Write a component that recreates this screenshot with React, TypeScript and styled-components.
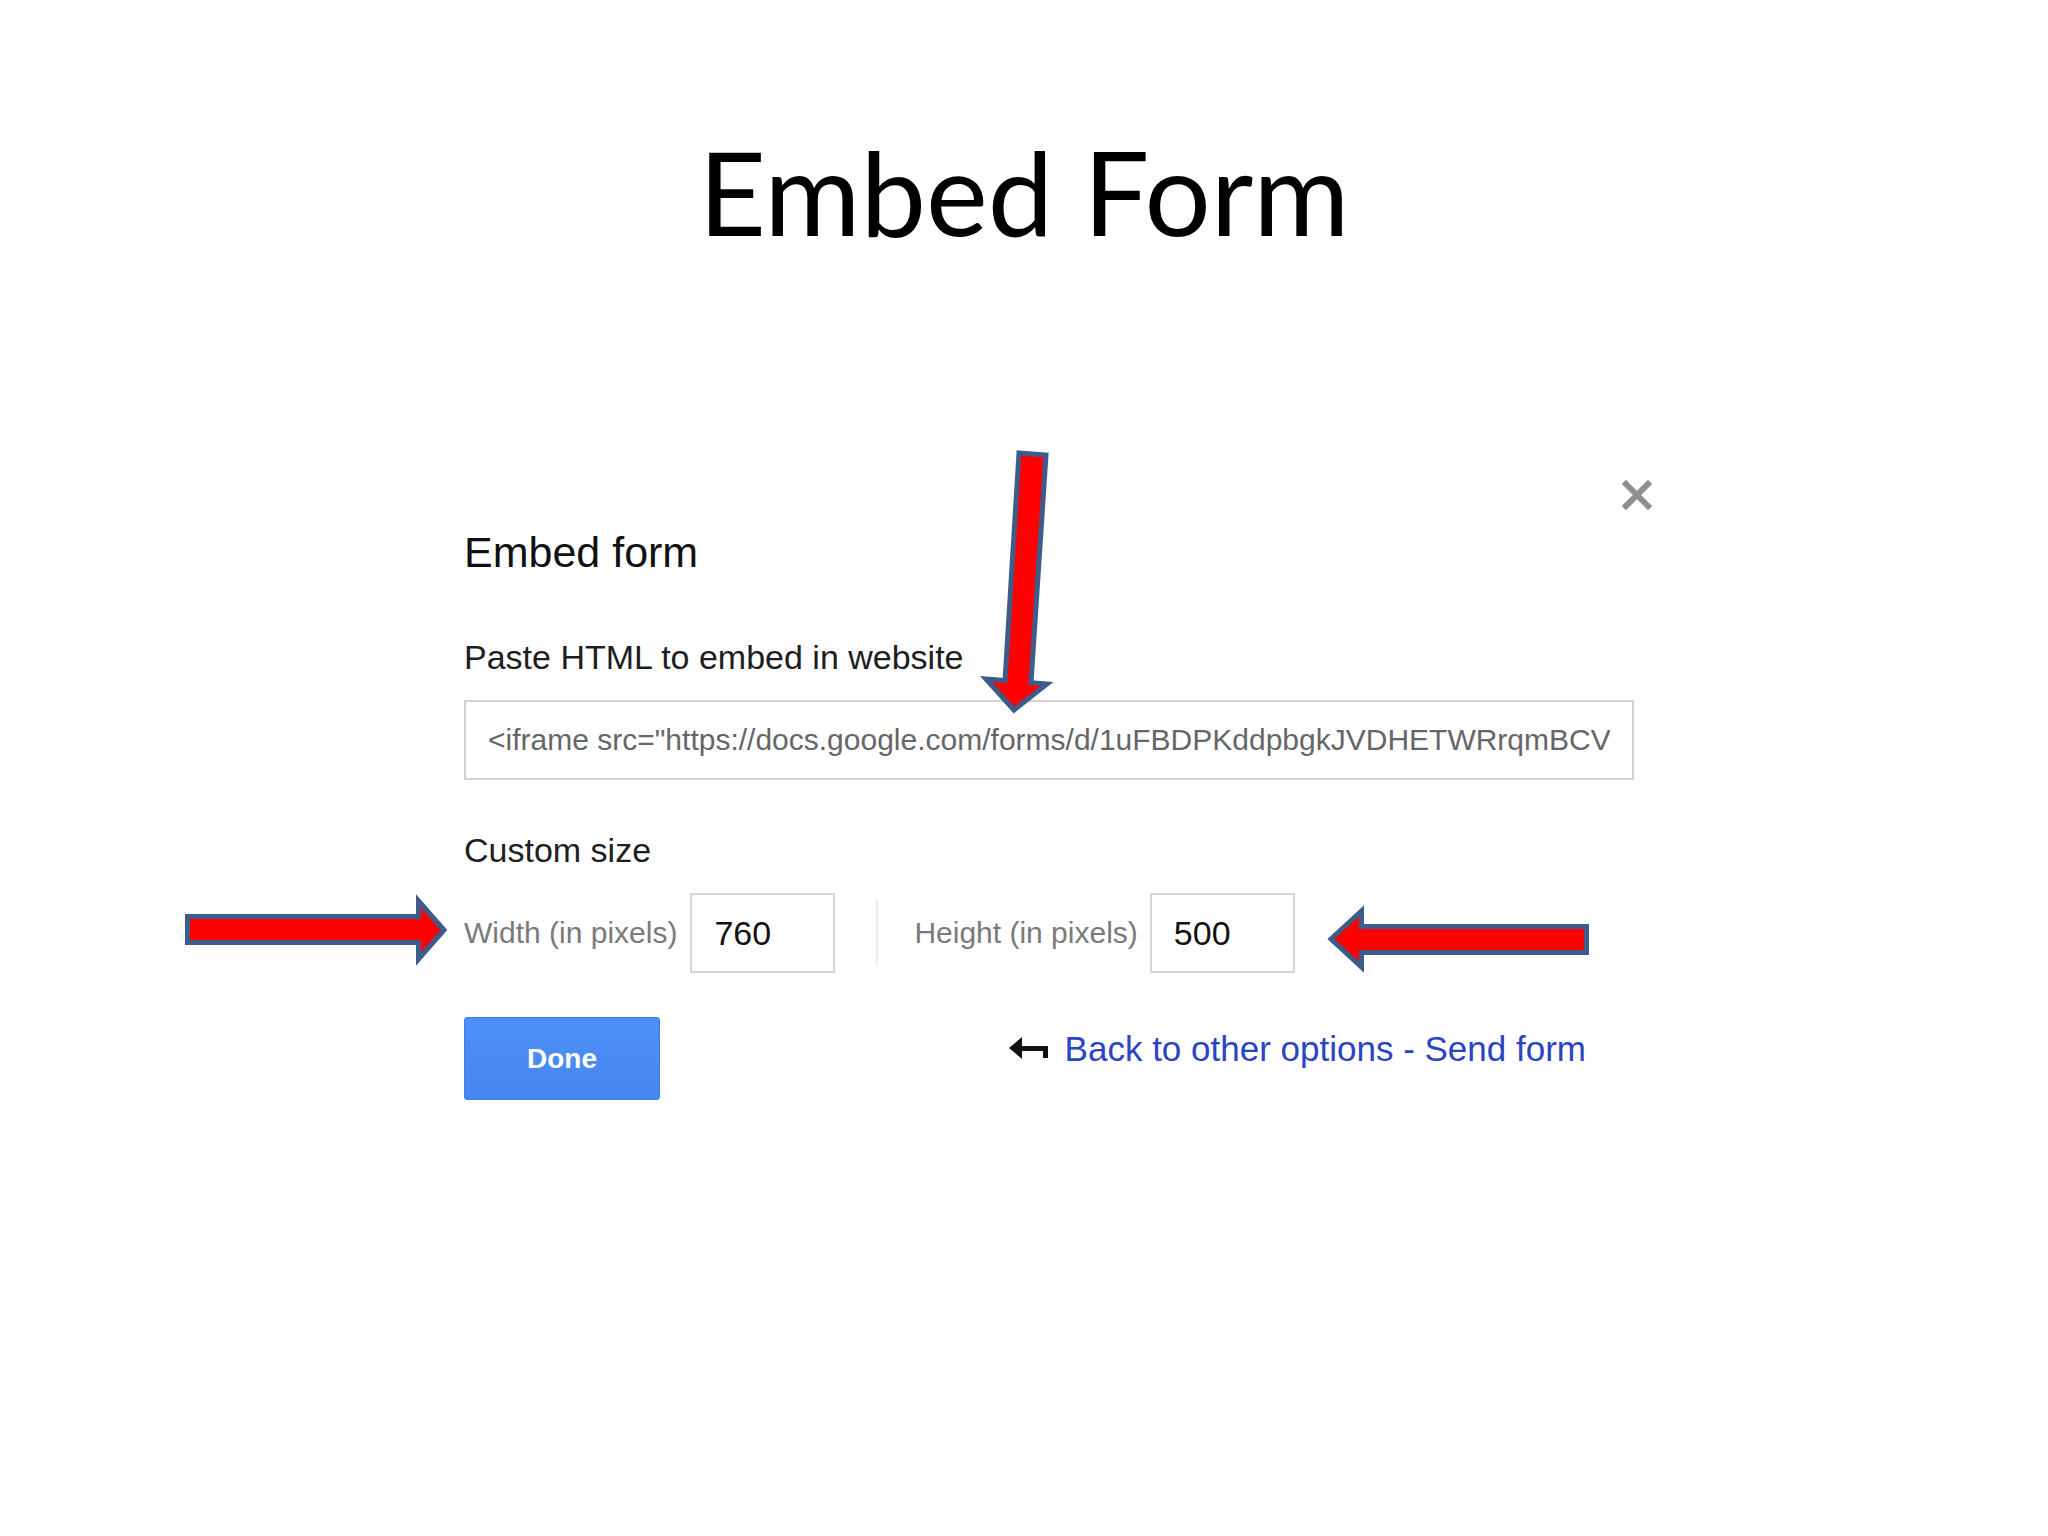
import React from "react";
import styled, { createGlobalStyle } from "styled-components";

const GlobalStyle = createGlobalStyle`
  html, body {
    margin: 0;
    padding: 0;
    background: #ffffff;
  }
  * { box-sizing: border-box; }
`;

const Slide = styled.div`
  position: relative;
  width: 2048px;
  height: 1536px;
  background: #ffffff;
  display: flex;
  flex-direction: column;
  overflow: hidden;
`;

const SlideTitle = styled.h1`
  margin: 117px 0 0;
  font-family: Lato, "Open Sans", sans-serif;
  font-weight: 400;
  font-size: 117px;
  line-height: 148px;
  color: #000;
  text-align: center;
  width: 100%;
`;

const Dialog = styled.section`
  margin: 215px 0 0 464px;
  width: 1188px;
  display: flex;
  flex-direction: column;
  font-family: "Liberation Sans", Arial, sans-serif;
  color: #222;
`;

const CloseRow = styled.div`
  height: 30px;
  display: flex;
  justify-content: flex-end;
`;

const CloseButton = styled.button`
  width: 30px;
  height: 30px;
  padding: 0;
  border: 0;
  background: transparent;
  display: flex;
  align-items: center;
  justify-content: center;
  cursor: pointer;
`;

const Heading = styled.h2`
  margin: 18px 0 0;
  font-size: 43px;
  line-height: 48px;
  font-weight: 400;
  color: #111;
`;

const SectionLabel = styled.div<{ $gap: number }>`
  margin-top: ${(p) => p.$gap}px;
  font-size: 34px;
  line-height: 40px;
  color: #1e1e1e;
`;

const EmbedInput = styled.input`
  margin-top: 23px;
  width: 1170px;
  height: 80px;
  border: 2px solid #d2d2d2;
  padding: 0 22px;
  font-family: "Liberation Sans", Arial, sans-serif;
  font-size: 30px;
  color: #666;
  background: #fff;
  outline: none;
`;

const SizeRow = styled.div`
  margin-top: 23px;
  height: 80px;
  display: flex;
  align-items: center;
`;

const SizeLabel = styled.label`
  font-size: 30px;
  color: #7a7a7a;
`;

const SizeInput = styled.input<{ $gap: number }>`
  margin-left: ${(p) => p.$gap}px;
  width: 145px;
  height: 80px;
  border: 2px solid #d6d6d6;
  padding: 0 22px;
  font-family: "Liberation Sans", Arial, sans-serif;
  font-size: 34px;
  color: #111;
  background: #fff;
  outline: none;
`;

const Divider = styled.span`
  width: 2px;
  height: 66px;
  background: #ececec;
  margin: 0 36px 0 41px;
`;

const ActionRow = styled.div`
  margin-top: 44px;
  width: 1170px;
  padding-right: 48px;
  display: flex;
  justify-content: space-between;
  align-items: flex-start;
`;

const DoneButton = styled.button`
  width: 196px;
  height: 83px;
  border: 1px solid #3d7ff0;
  border-radius: 3px;
  background: linear-gradient(#4d8ff8, #4787ef);
  color: #fff;
  font-family: "Liberation Sans", Arial, sans-serif;
  font-weight: 700;
  font-size: 28px;
  cursor: pointer;
`;

const BackLink = styled.a`
  margin-top: 12px;
  display: flex;
  align-items: center;
  gap: 16px;
  font-size: 35px;
  line-height: 40px;
  color: #2a44c4;
  text-decoration: none;
  cursor: pointer;
`;

const Annotations = styled.svg`
  position: absolute;
  inset: 0;
  width: 2048px;
  height: 1536px;
  pointer-events: none;
`;

const arrowStyle = {
  fill: "#ff0000",
  stroke: "#3e5c8a",
  strokeWidth: 5,
  strokeLinejoin: "miter" as const,
};

export default function App() {
  return (
    <>
      <GlobalStyle />
      <Slide>
        <SlideTitle>Embed Form</SlideTitle>
        <Dialog>
          <CloseRow>
            <CloseButton aria-label="Close">
              <svg width="30" height="30" viewBox="0 0 30 30">
                <path d="M4 4 L26 26 M26 4 L4 26" stroke="#8f8f8f" strokeWidth="6" strokeLinecap="square" />
              </svg>
            </CloseButton>
          </CloseRow>
          <Heading>Embed form</Heading>
          <SectionLabel $gap={61}>Paste HTML to embed in website</SectionLabel>
          <EmbedInput
            readOnly
            value={'<iframe src="https://docs.google.com/forms/d/1uFBDPKddpbgkJVDHETWRrqmBCVt7mD3kXz/viewform?embedded=true" width="760" height="500" frameborder="0" marginheight="0" marginwidth="0">Loading...</iframe>'}
          />
          <SectionLabel $gap={50}>Custom size</SectionLabel>
          <SizeRow>
            <SizeLabel>Width (in pixels)</SizeLabel>
            <SizeInput $gap={13} defaultValue="760" />
            <Divider />
            <SizeLabel>Height (in pixels)</SizeLabel>
            <SizeInput $gap={12} defaultValue="500" />
          </SizeRow>
          <ActionRow>
            <DoneButton>Done</DoneButton>
            <BackLink>
              <svg width="40" height="26" viewBox="0 0 40 26">
                <polygon points="0,12 13,1 13,23" fill="#111" />
                <rect x="11" y="10" width="28" height="5" fill="#111" />
                <rect x="34" y="10" width="5" height="12" fill="#111" />
              </svg>
              Back to other options - Send form
            </BackLink>
          </ActionRow>
        </Dialog>
        <Annotations viewBox="0 0 2048 1536">
          <polygon
            style={arrowStyle}
            points="1019,453 1046,455 1031,682.7 1047,684 1014,710 986,679 1005,680.6"
          />
          <polygon
            style={arrowStyle}
            points="187.5,916.5 418.5,916.5 418.5,901 444,930 418.5,959 418.5,942.5 187.5,942.5"
          />
          <polygon
            style={arrowStyle}
            points="1331,939 1361.5,911 1361.5,926.5 1586.5,926.5 1586.5,952.5 1361.5,952.5 1361.5,967"
          />
        </Annotations>
      </Slide>
    </>
  );
}
